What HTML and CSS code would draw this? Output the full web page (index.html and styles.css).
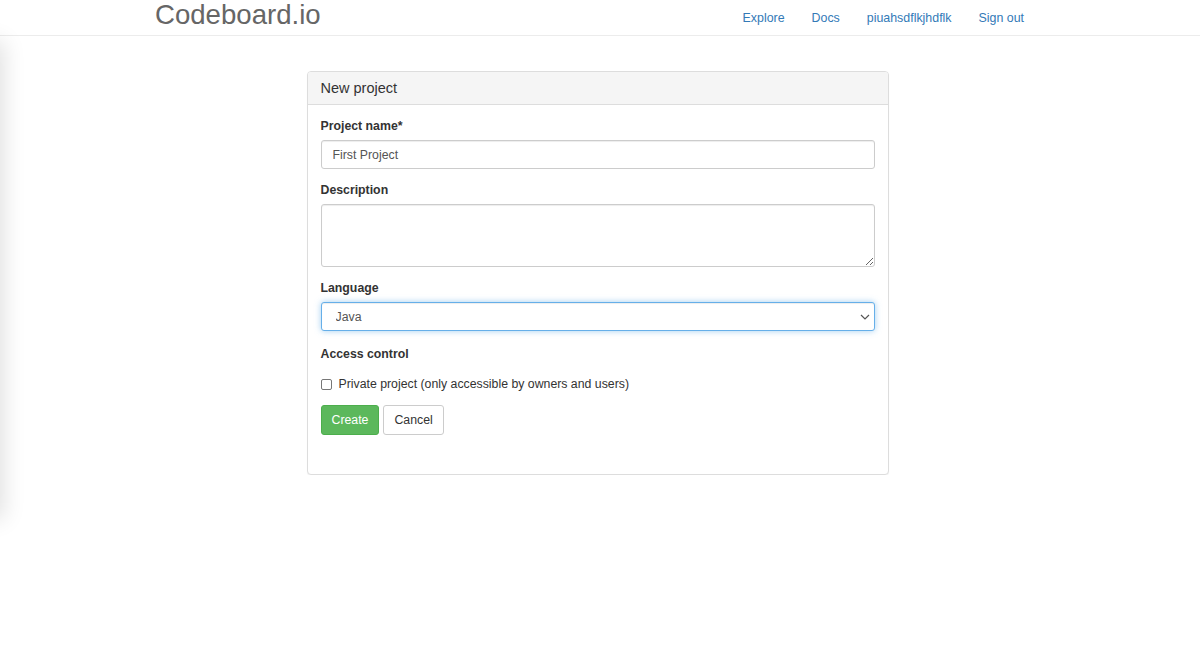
FILE: index.html
```html
<!DOCTYPE html>
<html>
<head>
<meta charset="utf-8">
<link rel="stylesheet" href="styles.css">
</head>
<body>
<div class="side-shadow"></div>
<header class="navbar">
  <div class="nav-inner">
    <a class="brand">Codeboard.io</a>
    <nav class="links">
      <a>Explore</a>
      <a>Docs</a>
      <a>piuahsdflkjhdflk</a>
      <a>Sign out</a>
    </nav>
  </div>
</header>
<main class="wrap">
  <section class="panel">
    <div class="panel-heading">New project</div>
    <div class="panel-body">
      <div class="group">
        <label class="lbl">Project name*</label>
        <input class="ctl" type="text" value="First Project">
      </div>
      <div class="group">
        <label class="lbl">Description</label>
        <textarea class="ctl area"></textarea>
      </div>
      <div class="group">
        <label class="lbl">Language</label>
        <div class="select-wrap">
          <select class="ctl sel"><option>Java</option></select>
          <svg class="chev" width="10" height="6" viewBox="0 0 10 6"><path d="M1 1 L5 5 L9 1" fill="none" stroke="#555" stroke-width="1.2"/></svg>
        </div>
      </div>
      <div class="lbl access">Access control</div>
      <label class="check"><span class="box"></span>Private project (only accessible by owners and users)</label>
      <div class="buttons">
        <button class="btn btn-success">Create</button>
        <button class="btn btn-default">Cancel</button>
      </div>
    </div>
  </section>
</main>
</body>
</html>
```
FILE: styles.css
```css
html, body {
  margin: 0;
  padding: 0;
  background: #fff;
  font-family: "Liberation Sans", Arial, sans-serif;
  color: #333;
  font-size: 12.3px;
}
.side-shadow {
  position: fixed;
  left: -40px;
  top: 45px;
  width: 40px;
  height: 470px;
  box-shadow: 0 0 22px 4px rgba(0,0,0,0.12);
  background: #fff;
}
.navbar {
  height: 35px;
  border-bottom: 1px solid #ececec;
  background: #fff;
}
.nav-inner {
  display: flex;
  align-items: center;
  justify-content: space-between;
  height: 35px;
  padding-left: 155px;
  padding-right: 176px;
}
.brand {
  font-size: 27.6px;
  color: #666;
  line-height: 30px;
  margin-top: -6px;
}
.links {
  display: flex;
  gap: 27px;
}
.links a {
  color: #337ab7;
  font-size: 12.4px;
}
.wrap {
  display: flex;
  justify-content: center;
  padding-top: 35px;
  padding-right: 5px;
}
.panel {
  width: 580px;
  border: 1px solid #ddd;
  border-radius: 4px;
  box-shadow: 0 1px 1px rgba(0,0,0,0.05);
  background: #fff;
}
.panel-heading {
  background: #f5f5f5;
  border-bottom: 1px solid #ddd;
  border-radius: 3px 3px 0 0;
  height: 32px;
  line-height: 32px;
  padding: 0 13px;
  font-size: 14.5px;
  color: #333;
}
.panel-body {
  padding: 12px 13px 39px 13px;
}
.group {
  margin-bottom: 12px;
}
.lbl {
  display: block;
  font-weight: bold;
  font-size: 12.3px;
  line-height: 18px;
  margin-bottom: 5px;
}
.ctl {
  display: block;
  box-sizing: border-box;
  width: 100%;
  height: 29px;
  border: 1px solid #ccc;
  border-radius: 3px;
  font-family: "Liberation Sans", Arial, sans-serif;
  font-size: 12.3px;
  color: #555;
  padding: 0 11px;
  background: #fff;
  box-shadow: inset 0 1px 1px rgba(0,0,0,0.075);
  outline: none;
}
.area {
  height: 63px;
  resize: vertical;
  padding: 6px 11px;
}
.select-wrap {
  position: relative;
}
.sel {
  -webkit-appearance: none;
  appearance: none;
  border-color: #66afe9;
  box-shadow: inset 0 1px 1px rgba(0,0,0,0.075), 0 0 6px rgba(102,175,233,0.6);
  padding-left: 14px;
}
.chev {
  position: absolute;
  right: 5px;
  top: 12px;
}
.access {
  margin-top: 14px;
}
.check {
  display: flex;
  align-items: center;
  margin-top: 12px;
  font-size: 12.3px;
  line-height: 18px;
  color: #333;
}
.box {
  width: 9px;
  height: 9px;
  border: 1px solid #777;
  border-radius: 2px;
  margin-right: 7px;
  background: #fff;
}
.buttons {
  display: flex;
  gap: 4px;
  margin-top: 12px;
}
.btn {
  height: 30px;
  padding: 0 10px;
  font-family: "Liberation Sans", Arial, sans-serif;
  font-size: 12.3px;
  border-radius: 3px;
  border: 1px solid #ccc;
}
.btn-success {
  background: #5cb85c;
  border-color: #4cae4c;
  color: #fff;
}
.btn-default {
  background: #fff;
  color: #333;
}
```
